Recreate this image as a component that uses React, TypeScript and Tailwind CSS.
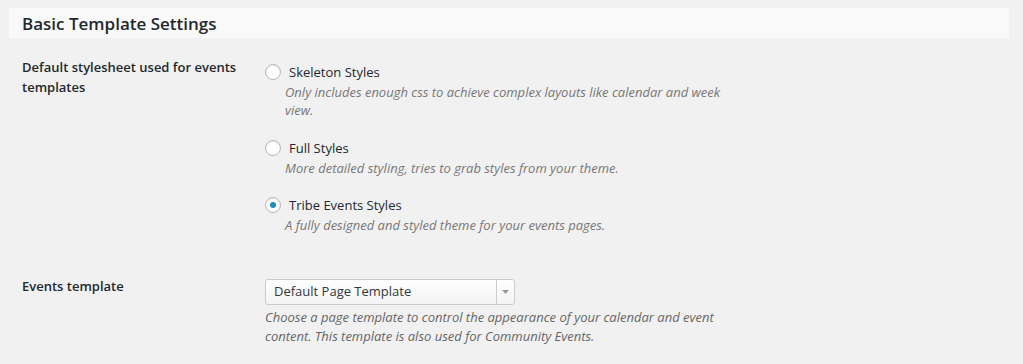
const options = [
  {
    label: "Skeleton Styles",
    description:
      "Only includes enough css to achieve complex layouts like calendar and week view.",
    checked: false,
    gap: "",
  },
  {
    label: "Full Styles",
    description: "More detailed styling, tries to grab styles from your theme.",
    checked: false,
    gap: "mt-[19px]",
  },
  {
    label: "Tribe Events Styles",
    description: "A fully designed and styled theme for your events pages.",
    checked: true,
    gap: "mt-[18px]",
  },
];

function Radio({ checked }: { checked: boolean }) {
  return (
    <span className="flex h-4 w-4 shrink-0 items-center justify-center rounded-full border border-[#b4b9be] bg-white shadow-[inset_0_1px_2px_rgba(0,0,0,0.1)]">
      {checked && <span className="h-[6px] w-[6px] rounded-full bg-[#1e8cbe]" />}
    </span>
  );
}

export default function App() {
  return (
    <div className="h-[364px] w-[1023px] bg-[#f1f1f1] pt-2 font-['Open_Sans',sans-serif] text-[13px] text-[#23282d]">
      <div className="mx-[9px] flex h-[30px] w-[1000px] items-center bg-[#f9f9f9] px-[13px]">
        <h2 className="text-[17px] font-semibold leading-none">Basic Template Settings</h2>
      </div>

      <div className="mt-[19px] flex px-[22px]">
        <div className="w-[243px] pr-5 font-semibold leading-[20px]">
          Default stylesheet used for events templates
        </div>
        <div className="flex flex-col pt-[5px]">
          {options.map((o) => (
            <div key={o.label} className={`w-[460px] ${o.gap}`}>
              <div className="flex h-5 items-center gap-2">
                <Radio checked={o.checked} />
                <span className="leading-[20px]">{o.label}</span>
              </div>
              <p className="mt-px pl-5 leading-[18px] text-[#777] italic">{o.description}</p>
            </div>
          ))}
        </div>
      </div>

      <div className="mt-[42px] flex px-[22px]">
        <div className="w-[243px] font-semibold leading-[20px]">Events template</div>
        <div className="pt-[3px]">
          <div className="flex h-[26px] w-[250px] items-stretch rounded-[3px] border border-[#ccc] bg-gradient-to-b from-white to-[#f4f4f4]">
            <span className="flex flex-1 items-center pl-2 text-[#32373c]">Default Page Template</span>
            <span className="flex w-[18px] items-center justify-center border-l border-[#ccc]">
              <svg width="7" height="4" viewBox="0 0 7 4">
                <path d="M0 0h7L3.5 4z" fill="#999" />
              </svg>
            </span>
          </div>
          <p className="mt-[3px] w-[470px] leading-[19px] text-[#666] italic">
            Choose a page template to control the appearance of your calendar and event content.
            This template is also used for Community Events.
          </p>
        </div>
      </div>
    </div>
  );
}
